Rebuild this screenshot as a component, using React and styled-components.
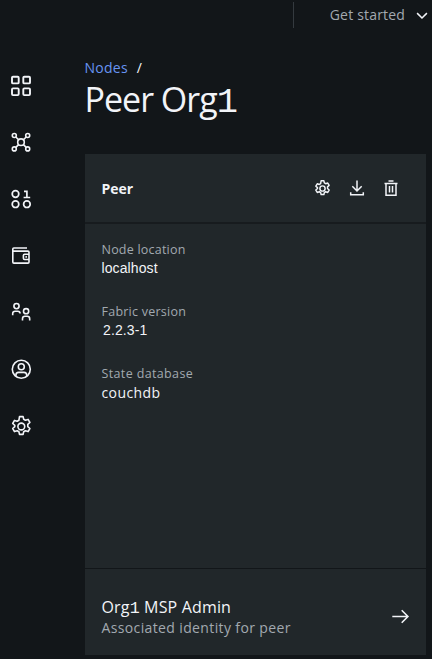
import React from 'react';
import styled, { createGlobalStyle } from 'styled-components';

const GlobalStyle = createGlobalStyle`
  *, *::before, *::after { box-sizing: border-box; }
  body { margin: 0; background: #121619; overflow: hidden; }
`;

const Page = styled.div`
  width: 432px;
  height: 659px;
  display: flex;
  background: #121619;
  color: #f2f4f8;
  font-family: 'Open Sans', 'Noto Sans', sans-serif;
  overflow: hidden;
`;

const SideNav = styled.nav`
  flex: 0 0 84.5px;
  display: flex;
  flex-direction: column;
  gap: 34.7px;
  padding: 74.5px 0 0 10px;
`;

const Main = styled.div`
  flex: 1;
  display: flex;
  flex-direction: column;
  min-width: 0;
`;

const Icon = styled.svg`
  display: block;
  flex: none;
  width: ${({ $size }) => $size}px;
  height: ${({ $size }) => $size}px;
  fill: none;
  stroke: #f2f4f8;
  stroke-width: ${({ $weight }) => $weight || 1.5};
`;

const TopBar = styled.header`
  height: 30px;
  display: flex;
  align-items: center;
  justify-content: flex-end;
  padding-right: 3px;
`;

const Divider = styled.span`
  width: 1px;
  height: 26px;
  margin-right: 36px;
  background: #343a3f;
`;

const Text = styled.span`
  display: block;
  white-space: nowrap;
  font-family: ${({ $face }) => ($face ? `'${$face}',` : '')} 'Open Sans', sans-serif;
  font-size: ${({ $size }) => $size}px;
  line-height: ${({ $line }) => $line}px;
  font-weight: ${({ $bold }) => ($bold ? 700 : 400)};
  letter-spacing: ${({ $track }) => $track || 0}px;
  padding-left: ${({ $indent }) => $indent || 0}px;
  color: ${({ $color }) => $color || '#f2f4f8'};
`;

const FootedDigit = styled.span`
  font-family: 'Liberation Mono', monospace;
  font-size: 1.04em;
  line-height: 1;
`;

const Chevron = styled.div`
  margin-left: 10px;
`;

const Heading = styled.div`
  height: 124px;
  padding-top: 28px;
`;

const Breadcrumb = styled.div`
  display: flex;
  gap: 9px;
`;

const Card = styled.section`
  width: 341px;
  height: 501px;
  display: flex;
  flex-direction: column;
  background: #21272a;
`;

const CardHeader = styled.div`
  height: 70px;
  display: flex;
  align-items: center;
  justify-content: space-between;
  padding: 1px 26.5px 0 17px;
  border-bottom: 2px solid #171b1e;
`;

const Actions = styled.div`
  display: flex;
  gap: 18px;
`;

const Details = styled.div`
  flex: 1;
  display: flex;
  flex-direction: column;
  gap: 24px;
  padding: 16px 17px 0;
`;

const Identity = styled.div`
  height: 87px;
  display: flex;
  align-items: center;
  justify-content: space-between;
  padding: 9px 16px 0 17px;
  border-top: 1px solid #121619;
`;

const GearShape = ({ r = 3.4 }) => (
  <>
    <path
      d="M9.2 1.6h3.600l.600 2.700 1.700 1 2.700-.900 1.800 3.100-2.100 1.900v2.200l2.100 1.900-1.800 3.100-2.700-.900-1.700 1-.600 2.700H9.200l-.600-2.700-1.700-1-2.700.900-1.800-3.100 2.100-1.900V10.400L2.400 8.500l1.800-3.100 2.700.900 1.700-1z"
      strokeLinejoin="round"
      transform="translate(0 -.5)"
    />
    <circle cx="11" cy="11" r={r} />
  </>
);

const navIcons = [
  {
    name: 'Dashboard',
    weight: 1.9,
    art: (
      <>
        <rect x="2" y="1.7" width="6.7" height="6.7" rx="1" />
        <rect x="13.3" y="1.7" width="6.7" height="6.7" rx="1" />
        <rect x="2" y="13.4" width="6.7" height="6.7" rx="1" />
        <rect x="13.3" y="13.4" width="6.7" height="6.7" rx="1" />
      </>
    ),
  },
  {
    name: 'Nodes',
    weight: 1.6,
    art: (
      <>
        <circle cx="11" cy="11.2" r="3.3" />
        <circle cx="4.3" cy="4.5" r="2" />
        <circle cx="17.7" cy="4.5" r="2" />
        <circle cx="4.3" cy="17.9" r="2" />
        <circle cx="17.7" cy="17.9" r="2" />
        <path d="M5.8 6 8.600 8.800M16.200 6l-2.800 2.800M5.800 16.400l2.800-2.800M16.200 16.400l-2.800-2.800" />
      </>
    ),
  },
  {
    name: 'Channels',
    weight: 1.7,
    art: (
      <>
        <circle cx="5.5" cy="6" r="3.3" />
        <circle cx="5.5" cy="16.2" r="3.3" />
        <circle cx="16.9" cy="16.2" r="3.3" />
        <path d="M14 3.300h2.900v6.200M13.600 9.500h6.600" />
      </>
    ),
  },
  {
    name: 'Wallet',
    weight: 1.6,
    art: (
      <>
        <path d="M17 3H3.900q-1.100 0-1.100 1.100v12.900q0 1.100 1.100 1.100h14q1.100 0 1.100-1.100V7.200q0-1.100-1.100-1.100h-15" />
        <path d="M19 9.200h-4.400q-1.200 0-1.200 1.200v2.900q0 1.200 1.200 1.200H19" />
        <rect x="15.400" y="11.100" width="1.600" height="1.600" fill="#f2f4f8" stroke="none" />
      </>
    ),
  },
  {
    name: 'Organizations',
    weight: 1.6,
    art: (
      <>
        <circle cx="6.5" cy="5.1" r="2.6" />
        <path d="M2.700 14.300v-1.700q0-2.400 2.400-2.400h2.600q2.400 0 2.400 2.400" />
        <circle cx="16.100" cy="10.200" r="2.6" />
        <path d="M12.500 19.400v-1.700q0-2.400 2.400-2.400h2.400q2.400 0 2.400 2.400v1.700" />
      </>
    ),
  },
  {
    name: 'Users',
    weight: 1.6,
    art: (
      <>
        <circle cx="11.3" cy="11.2" r="9" />
        <circle cx="11.3" cy="8.8" r="3" />
        <path d="M5.900 18v-.900q0-2.700 2.700-2.700h5.400q2.700 0 2.700 2.700v.900" />
      </>
    ),
  },
  { name: 'Settings', weight: 1.6, art: <g transform="translate(.3 .5)"><GearShape /></g> },
];

const details = [
  { label: 'Node location', value: 'localhost', face: 'Liberation Sans', track: 0.22, valueTrack: 0.1 },
  { label: 'Fabric version', value: '2.2.3-1', face: 'Liberation Sans', track: 0.24, valueTrack: 0.1, indent: 1.5 },
  { label: 'State database', value: 'couchdb', track: 0.36, valueTrack: 0.4 },
];

export default function App() {
  return (
    <>
      <GlobalStyle />
      <Page>
        <SideNav>
          {navIcons.map(({ name, weight, art }) => (
            <Icon key={name} aria-label={name} viewBox="0 0 22 22" $size={22} $weight={weight}>
              {art}
            </Icon>
          ))}
        </SideNav>
        <Main>
          <TopBar>
            <Divider />
            <Text $size={14} $line={20} $track={0.18} $color="#a2a9b0">Get started</Text>
            <Chevron>
              <Icon viewBox="0 0 14 14" $size={14} $weight={1.5}>
                <path d="M2.1 5.1 7 10l4.9-4.9" />
              </Icon>
            </Chevron>
          </TopBar>
          <Heading>
            <Breadcrumb>
              <Text $size={14} $line={20} $track={0.25} $color="#6794f2">Nodes</Text>
              <Text $size={14} $line={20}>/</Text>
            </Breadcrumb>
            <Text $size={34} $line={42} $track={-1}>Peer Org<FootedDigit>1</FootedDigit></Text>
          </Heading>
          <Card>
            <CardHeader>
              <Text $size={14} $line={20} $bold>Peer</Text>
              <Actions>
                <Icon aria-label="Settings" viewBox="0 0 22 22" $size={17} $weight={1.9}>
                  <GearShape />
                </Icon>
                <Icon aria-label="Download" viewBox="0 0 16 16" $size={16} $weight={1.5}>
                  <path d="M8 .5v10.300M3.300 6.300 8 11l4.700-4.700M1.700 12.300v2.500h12.600v-2.500" />
                </Icon>
                <Icon aria-label="Delete" viewBox="0 0 16 16" $size={16} $weight={1.5}>
                  <path d="M5.500 1h5M1.500 3.500h13M3 3.500v11.700h10V3.500M6.500 6v6.500M9.500 6v6.500" />
                </Icon>
              </Actions>
            </CardHeader>
            <Details>
              {details.map(({ label, value, face, track, valueTrack, indent }) => (
                <div key={label}>
                  <Text $size={12.5} $line={19} $color="#a2a9b0" $track={track}>{label}</Text>
                  <Text $size={14} $line={19} $face={face} $track={valueTrack} $indent={indent}>{value}</Text>
                </div>
              ))}
            </Details>
            <Identity>
              <div>
                <Text $size={16} $line={22} $track={0.16}>Org<FootedDigit>1</FootedDigit> MSP Admin</Text>
                <Text $size={14} $line={20} $track={0.37} $color="#a2a9b0">Associated identity for peer</Text>
              </div>
              <Icon aria-label="Open" viewBox="0 0 18 18" $size={18} $weight={1.6}>
                <path d="M.3 8.500h15.500M9.700 2.300l6.200 6.200-6.200 6.200" />
              </Icon>
            </Identity>
          </Card>
        </Main>
      </Page>
    </>
  );
}
